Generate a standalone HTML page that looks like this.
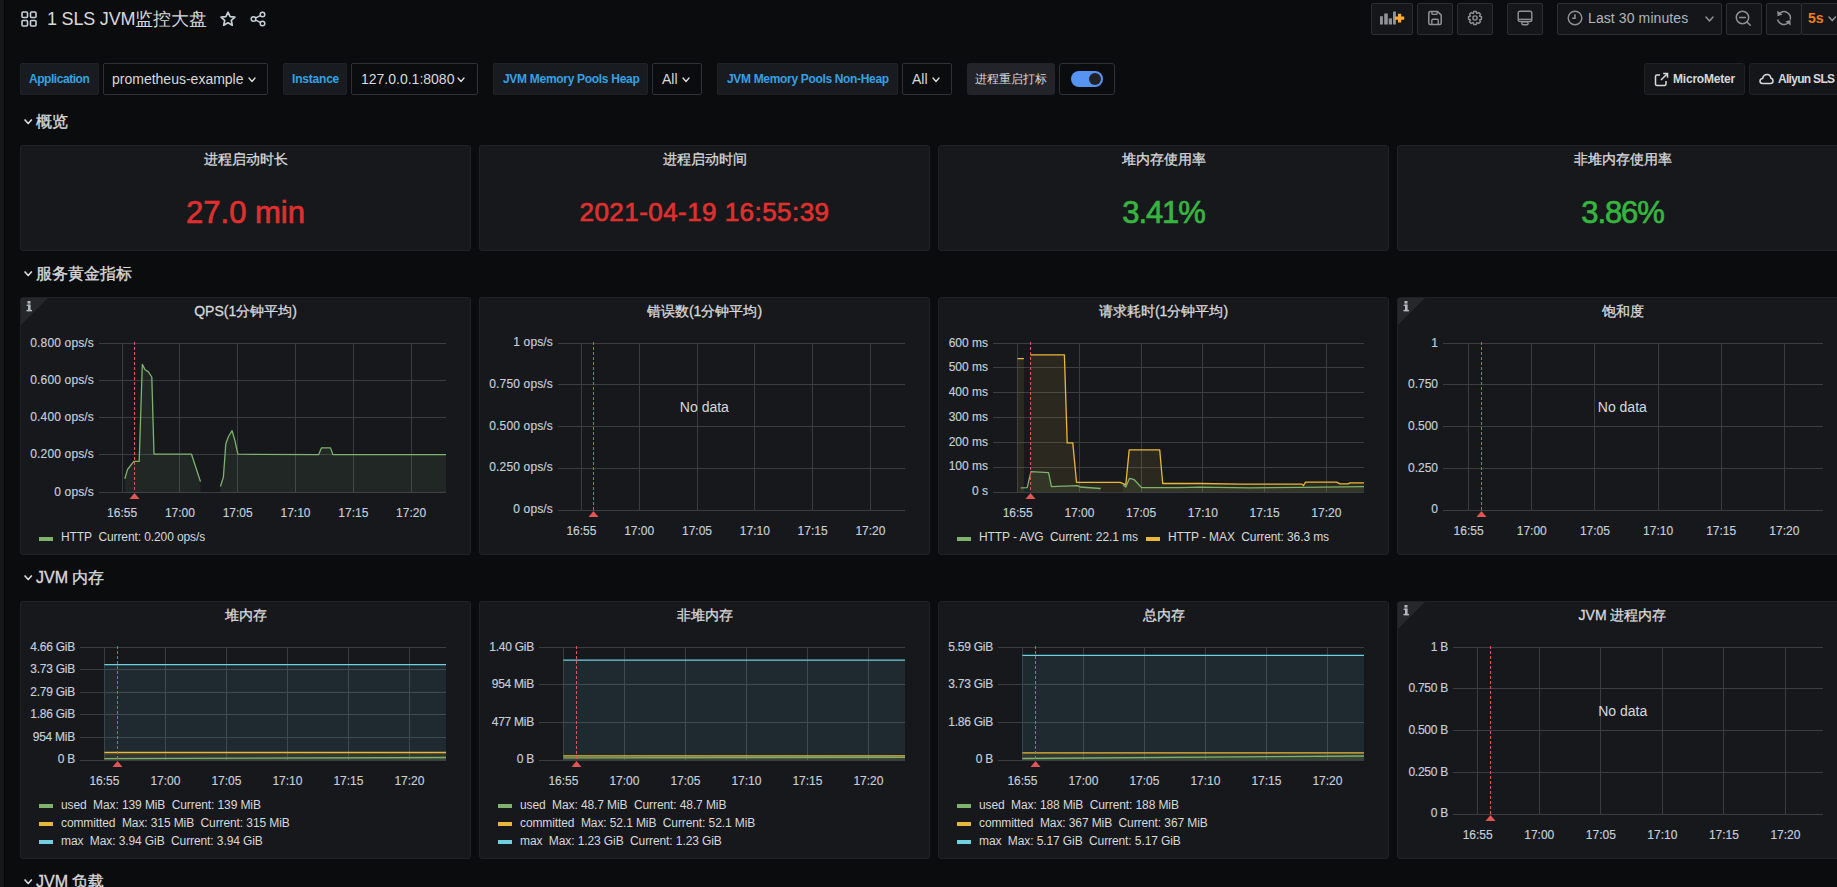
<!DOCTYPE html>
<html><head><meta charset="utf-8"><style>
html,body{margin:0;padding:0;}
body{width:1837px;height:887px;overflow:hidden;background:#0b0c0e;position:relative;font-family:"Liberation Sans", sans-serif;}
.t{position:absolute;white-space:nowrap;line-height:1;}
.b{position:absolute;box-sizing:border-box;}
.s{position:absolute;overflow:visible;}
.c{display:inline-block;width:1em;text-align:center;font-style:normal;}
</style></head><body>

<div class="b" style="left:0px;top:0px;width:4px;height:887px;background:#16181c;border-radius:0px;"></div>
<div class="b" style="left:4px;top:0px;width:1px;height:887px;background:#060709;border-radius:0px;"></div>
<svg class="s" style="left:21px;top:11px;" width="16" height="16" viewBox="0 0 16 16"><rect x="1" y="1" width="5.5" height="5.5" rx="1" fill="none" stroke="#c7d0d9" stroke-width="1.6"/><rect x="1" y="9.5" width="5.5" height="5.5" rx="1" fill="none" stroke="#c7d0d9" stroke-width="1.6"/><rect x="9.5" y="1" width="5.5" height="5.5" rx="1" fill="none" stroke="#c7d0d9" stroke-width="1.6"/><rect x="9.5" y="9.5" width="5.5" height="5.5" rx="1" fill="none" stroke="#c7d0d9" stroke-width="1.6"/></svg>
<div class="t" style="left:47px;top:19px;font-size:18px;color:#d8d9da;font-weight:400;transform:translateY(-50%);letter-spacing:-0.2px;">1 SLS JVM<i class="c">监</i><i class="c">控</i><i class="c">大</i><i class="c">盘</i></div>
<svg class="s" style="left:220px;top:11px;" width="16" height="16" viewBox="0 0 16 16"><path transform="translate(8 8.2) scale(1.1) translate(-8 -8.2)" d="M8 1.8 L9.9 5.9 L14.3 6.3 L11 9.3 L11.9 13.7 L8 11.4 L4.1 13.7 L5 9.3 L1.7 6.3 L6.1 5.9 Z" fill="none" stroke="#c7d0d9" stroke-width="1.5" stroke-linejoin="round"/></svg>
<svg class="s" style="left:250px;top:11px;" width="16" height="16" viewBox="0 0 16 16"><circle cx="12.5" cy="3.5" r="2.3" fill="none" stroke="#c7d0d9" stroke-width="1.5"/><circle cx="3.5" cy="8" r="2.3" fill="none" stroke="#c7d0d9" stroke-width="1.5"/><circle cx="12.5" cy="12.5" r="2.3" fill="none" stroke="#c7d0d9" stroke-width="1.5"/><path d="M5.6 6.9 L10.4 4.6 M5.6 9.1 L10.4 11.4" stroke="#c7d0d9" stroke-width="1.5"/></svg>
<div class="b" style="left:1371px;top:3px;width:42px;height:32px;background:#141619;border:1px solid #2c3033;border-radius:2px;"></div>
<div class="b" style="left:1417px;top:3px;width:36px;height:32px;background:#141619;border:1px solid #2c3033;border-radius:2px;"></div>
<div class="b" style="left:1457px;top:3px;width:36px;height:32px;background:#141619;border:1px solid #2c3033;border-radius:2px;"></div>
<div class="b" style="left:1507px;top:3px;width:36px;height:32px;background:#141619;border:1px solid #2c3033;border-radius:2px;"></div>
<div class="b" style="left:1557px;top:3px;width:165px;height:32px;background:#141619;border:1px solid #2c3033;border-radius:2px;"></div>
<div class="b" style="left:1726px;top:3px;width:36px;height:32px;background:#141619;border:1px solid #2c3033;border-radius:2px;"></div>
<div class="b" style="left:1766px;top:3px;width:36px;height:32px;background:#141619;border:1px solid #2c3033;border-radius:2px;"></div>
<div class="b" style="left:1801px;top:3px;width:49px;height:32px;background:#141619;border:1px solid #2c3033;border-radius:2px;"></div>
<svg class="s" style="left:1380px;top:11px;" width="26" height="16" viewBox="0 0 26 16"><rect x="0" y="5.2" width="2.9" height="8.3" fill="#8e9297"/><rect x="4.2" y="2.5" width="3.6" height="11" fill="#8e9297"/><rect x="8.8" y="7.4" width="3.2" height="6.1" fill="#8e9297"/><rect x="13" y="0.5" width="2.9" height="13" fill="#8e9297"/><path d="M15 7.1 H24.2 M19.6 2.7 V11.5" stroke="#ffab2e" stroke-width="3.2"/></svg>
<svg class="s" style="left:1427px;top:10px;" width="16" height="16" viewBox="0 0 16 16"><path d="M1.8 3 Q1.8 1.5 3.3 1.5 H10.6 L14.2 5.1 V13 Q14.2 14.5 12.7 14.5 H3.3 Q1.8 14.5 1.8 13 Z" fill="none" stroke="#8e9297" stroke-width="1.5" stroke-linejoin="round"/><path d="M4.9 1.8 V3.4 Q4.9 4.4 5.9 4.4 H9.1 Q10.1 4.4 10.1 3.4 V1.8 M4.8 14.2 V10.6 Q4.8 9.3 6.1 9.3 H10.1 Q11.3 9.3 11.3 10.6 V14.2" fill="none" stroke="#8e9297" stroke-width="1.4"/></svg>
<svg class="s" style="left:1467px;top:9.8px;" width="16" height="16" viewBox="0 0 16 16"><polygon points="12.56,6.20 14.48,6.76 14.48,9.24 12.56,9.80 12.50,9.95 13.46,11.71 11.71,13.46 9.95,12.50 9.80,12.56 9.24,14.48 6.76,14.48 6.20,12.56 6.05,12.50 4.29,13.46 2.54,11.71 3.50,9.95 3.44,9.80 1.52,9.24 1.52,6.76 3.44,6.20 3.50,6.05 2.54,4.29 4.29,2.54 6.05,3.50 6.20,3.44 6.76,1.52 9.24,1.52 9.80,3.44 9.95,3.50 11.71,2.54 13.46,4.29 12.50,6.05" fill="none" stroke="#8e9297" stroke-width="1.4" stroke-linejoin="round"/><circle cx="8" cy="8" r="2.1" fill="none" stroke="#8e9297" stroke-width="1.4"/></svg>
<svg class="s" style="left:1517px;top:10px;" width="16" height="17" viewBox="0 0 16 17"><rect x="1.2" y="1.2" width="13.6" height="10.3" rx="1.8" fill="none" stroke="#8e9297" stroke-width="1.4"/><path d="M1.5 9.3 H14.5" stroke="#8e9297" stroke-width="1.3"/><rect x="4.9" y="11.9" width="6.2" height="2.9" rx="1.4" fill="none" stroke="#8e9297" stroke-width="1.4"/></svg>
<svg class="s" style="left:1567px;top:10px;" width="16" height="16" viewBox="0 0 16 16"><circle cx="8" cy="8" r="6.8" fill="none" stroke="#8e9297" stroke-width="1.4"/><path d="M8 4.3 V8.2 H5.2" fill="none" stroke="#8e9297" stroke-width="1.5"/></svg>
<div class="t" style="left:1588px;top:18px;font-size:14px;color:#b0b6bd;font-weight:400;transform:translateY(-50%);letter-spacing:0.1px;">Last 30 minutes</div>
<svg class="s" style="left:1704.5px;top:15.8px;" width="9" height="6" viewBox="0 0 9 6"><path d="M1 1 L4.5 5 L8 1" fill="none" stroke="#8e9297" stroke-width="1.5" stroke-linecap="round" stroke-linejoin="round"/></svg>
<svg class="s" style="left:1735px;top:10px;" width="18" height="18" viewBox="0 0 18 18"><circle cx="7.5" cy="7.5" r="6.2" fill="none" stroke="#8e9297" stroke-width="1.5"/><path d="M4.6 7.5 H10.4 M12 12 L15.3 15.3" stroke="#8e9297" stroke-width="1.5" stroke-linecap="round"/></svg>
<svg class="s" style="left:1775px;top:9px;" width="18" height="18" viewBox="0 0 18 18"><path d="M4.6 4.4 A6.5 6.5 0 0 1 15.3 10.7" fill="none" stroke="#8e9297" stroke-width="1.5"/><path d="M2.6 10.5 A6.5 6.5 0 0 0 13.3 13.8" fill="none" stroke="#8e9297" stroke-width="1.5"/><path d="M2.2 1.8 L2.6 7.2 L7.6 5.6 Z" fill="#8e9297"/><path d="M15.7 16.4 L15.4 11.0 L10.4 12.5 Z" fill="#8e9297"/></svg>
<div class="t" style="left:1808px;top:18px;font-size:14px;color:#f77b1c;font-weight:700;transform:translateY(-50%);">5s</div>
<svg class="s" style="left:1828px;top:16px;" width="8.5" height="5.6" viewBox="0 0 8.5 5.6"><path d="M1 1 L4.25 4.6 L7.5 1" fill="none" stroke="#8e9297" stroke-width="1.5" stroke-linecap="round" stroke-linejoin="round"/></svg>
<div class="b" style="left:20px;top:63px;width:79px;height:32px;background:#181b1f;border:1px solid #202226;border-radius:2px;"></div>
<div class="t" style="left:29px;top:79px;font-size:12px;color:#33a2e5;font-weight:700;transform:translateY(-50%);letter-spacing:-0.45px;">Application</div>
<div class="b" style="left:103px;top:63px;width:165px;height:32px;background:#0b0c0e;border:1px solid #2c3235;border-radius:2px;"></div>
<div class="t" style="left:112px;top:79px;font-size:14px;color:#d8d9da;font-weight:400;transform:translateY(-50%);">prometheus-example</div>
<svg class="s" style="left:248px;top:77px;" width="8" height="5.5" viewBox="0 0 8 5.5"><path d="M1 1 L4.0 4.5 L7 1" fill="none" stroke="#d8d9da" stroke-width="1.4" stroke-linecap="round" stroke-linejoin="round"/></svg>
<div class="b" style="left:283px;top:63px;width:64px;height:32px;background:#181b1f;border:1px solid #202226;border-radius:2px;"></div>
<div class="t" style="left:292px;top:79px;font-size:12px;color:#33a2e5;font-weight:700;transform:translateY(-50%);letter-spacing:-0.2px;">Instance</div>
<div class="b" style="left:351px;top:63px;width:127px;height:32px;background:#0b0c0e;border:1px solid #2c3235;border-radius:2px;"></div>
<div class="t" style="left:361px;top:79px;font-size:14px;color:#d8d9da;font-weight:400;transform:translateY(-50%);">127.0.0.1:8080</div>
<svg class="s" style="left:457px;top:77px;" width="8" height="5.5" viewBox="0 0 8 5.5"><path d="M1 1 L4.0 4.5 L7 1" fill="none" stroke="#d8d9da" stroke-width="1.4" stroke-linecap="round" stroke-linejoin="round"/></svg>
<div class="b" style="left:493px;top:63px;width:155px;height:32px;background:#181b1f;border:1px solid #202226;border-radius:2px;"></div>
<div class="t" style="left:503px;top:79px;font-size:12px;color:#33a2e5;font-weight:700;transform:translateY(-50%);letter-spacing:-0.3px;">JVM Memory Pools Heap</div>
<div class="b" style="left:652px;top:63px;width:50px;height:32px;background:#0b0c0e;border:1px solid #2c3235;border-radius:2px;"></div>
<div class="t" style="left:662px;top:79px;font-size:14px;color:#d8d9da;font-weight:400;transform:translateY(-50%);">All</div>
<svg class="s" style="left:682px;top:77px;" width="8" height="5.5" viewBox="0 0 8 5.5"><path d="M1 1 L4.0 4.5 L7 1" fill="none" stroke="#d8d9da" stroke-width="1.4" stroke-linecap="round" stroke-linejoin="round"/></svg>
<div class="b" style="left:717px;top:63px;width:181px;height:32px;background:#181b1f;border:1px solid #202226;border-radius:2px;"></div>
<div class="t" style="left:727px;top:79px;font-size:12px;color:#33a2e5;font-weight:700;transform:translateY(-50%);letter-spacing:-0.33px;">JVM Memory Pools Non-Heap</div>
<div class="b" style="left:902px;top:63px;width:50px;height:32px;background:#0b0c0e;border:1px solid #2c3235;border-radius:2px;"></div>
<div class="t" style="left:912px;top:79px;font-size:14px;color:#d8d9da;font-weight:400;transform:translateY(-50%);">All</div>
<svg class="s" style="left:932px;top:77px;" width="8" height="5.5" viewBox="0 0 8 5.5"><path d="M1 1 L4.0 4.5 L7 1" fill="none" stroke="#d8d9da" stroke-width="1.4" stroke-linecap="round" stroke-linejoin="round"/></svg>
<div class="b" style="left:967px;top:63px;width:88px;height:32px;background:#222429;border-radius:3px;"></div>
<div class="t" style="left:975px;top:79px;font-size:12px;color:#d8d9da;font-weight:400;transform:translateY(-50%);"><i class="c">进</i><i class="c">程</i><i class="c">重</i><i class="c">启</i><i class="c">打</i><i class="c">标</i></div>
<div class="b" style="left:1059px;top:63px;width:56px;height:32px;background:#0b0c0e;border:1px solid #2c3235;border-radius:3px;"></div>
<div class="b" style="left:1071px;top:71px;width:32px;height:16px;background:#5794f2;border-radius:8px;"></div>
<div class="b" style="left:1089px;top:73px;width:12px;height:12px;border-radius:6px;background:#222226;"></div>
<div class="b" style="left:1644px;top:63px;width:101px;height:32px;background:#141619;border:1px solid #202226;border-radius:3px;"></div>
<svg class="s" style="left:1654px;top:72px;" width="15" height="15" viewBox="0 0 15 15"><path d="M6 3 H3 Q1.5 3 1.5 4.5 V12 Q1.5 13.5 3 13.5 H10.5 Q12 13.5 12 12 V9" fill="none" stroke="#d8d9da" stroke-width="1.5"/><path d="M7 8 L13.3 1.7 M9.2 1.5 H13.5 V5.8" fill="none" stroke="#d8d9da" stroke-width="1.5"/></svg>
<div class="t" style="left:1673px;top:79px;font-size:12px;color:#d8d9da;font-weight:700;transform:translateY(-50%);letter-spacing:-0.2px;">MicroMeter</div>
<div class="b" style="left:1749px;top:63px;width:101px;height:32px;background:#141619;border:1px solid #202226;border-radius:3px;"></div>
<svg class="s" style="left:1759px;top:73px;" width="15" height="12" viewBox="0 0 15 12"><path d="M3.5 10.5 Q1 10.5 1 8 Q1 5.6 3.6 5.5 Q4.5 1.5 8 1.5 Q11.3 1.5 12 5.3 Q14 5.7 14 8 Q14 10.5 11.5 10.5 Z" fill="none" stroke="#d8d9da" stroke-width="1.5"/></svg>
<div class="t" style="left:1778px;top:79px;font-size:12px;color:#d8d9da;font-weight:700;transform:translateY(-50%);letter-spacing:-0.7px;">Aliyun SLS</div>
<svg class="s" style="left:23.6px;top:118.8px;" width="8.4" height="5.5" viewBox="0 0 8.4 5.5"><path d="M1 1 L4.2 4.5 L7.4 1" fill="none" stroke="#d8d9da" stroke-width="1.7" stroke-linecap="round" stroke-linejoin="round"/></svg>
<div class="t" style="left:36px;top:122px;font-size:16px;color:#d8d9da;font-weight:400;transform:translateY(-50%);-webkit-text-stroke:0.35px #d8d9da;"><i class="c">概</i><i class="c">览</i></div>
<svg class="s" style="left:23.6px;top:270.8px;" width="8.4" height="5.5" viewBox="0 0 8.4 5.5"><path d="M1 1 L4.2 4.5 L7.4 1" fill="none" stroke="#d8d9da" stroke-width="1.7" stroke-linecap="round" stroke-linejoin="round"/></svg>
<div class="t" style="left:36px;top:274px;font-size:16px;color:#d8d9da;font-weight:400;transform:translateY(-50%);-webkit-text-stroke:0.35px #d8d9da;"><i class="c">服</i><i class="c">务</i><i class="c">黄</i><i class="c">金</i><i class="c">指</i><i class="c">标</i></div>
<svg class="s" style="left:23.6px;top:574.8px;" width="8.4" height="5.5" viewBox="0 0 8.4 5.5"><path d="M1 1 L4.2 4.5 L7.4 1" fill="none" stroke="#d8d9da" stroke-width="1.7" stroke-linecap="round" stroke-linejoin="round"/></svg>
<div class="t" style="left:36px;top:578px;font-size:16px;color:#d8d9da;font-weight:400;transform:translateY(-50%);-webkit-text-stroke:0.35px #d8d9da;">JVM <i class="c">内</i><i class="c">存</i></div>
<svg class="s" style="left:23.6px;top:878.8px;" width="8.4" height="5.5" viewBox="0 0 8.4 5.5"><path d="M1 1 L4.2 4.5 L7.4 1" fill="none" stroke="#d8d9da" stroke-width="1.7" stroke-linecap="round" stroke-linejoin="round"/></svg>
<div class="t" style="left:36px;top:882px;font-size:16px;color:#d8d9da;font-weight:400;transform:translateY(-50%);-webkit-text-stroke:0.35px #d8d9da;">JVM <i class="c">负</i><i class="c">载</i></div>
<div class="b" style="left:20px;top:145px;width:451px;height:106px;background:#16181c;border:1px solid #202226;border-radius:3px;"></div>
<div class="t" style="left:245.5px;top:158.5px;font-size:14px;color:#d8d9da;font-weight:400;transform:translate(-50%,-50%);-webkit-text-stroke:0.3px #d8d9da;"><i class="c">进</i><i class="c">程</i><i class="c">启</i><i class="c">动</i><i class="c">时</i><i class="c">长</i></div>
<div class="t" style="left:245.5px;top:211.5px;font-size:31px;color:#e0302e;font-weight:400;transform:translate(-50%,-50%);-webkit-text-stroke:0.7px #e0302e;">27.0 min</div>
<div class="b" style="left:479px;top:145px;width:451px;height:106px;background:#16181c;border:1px solid #202226;border-radius:3px;"></div>
<div class="t" style="left:704.5px;top:158.5px;font-size:14px;color:#d8d9da;font-weight:400;transform:translate(-50%,-50%);-webkit-text-stroke:0.3px #d8d9da;"><i class="c">进</i><i class="c">程</i><i class="c">启</i><i class="c">动</i><i class="c">时</i><i class="c">间</i></div>
<div class="t" style="left:704.5px;top:211.5px;font-size:26px;color:#e0302e;font-weight:400;transform:translate(-50%,-50%);-webkit-text-stroke:0.7px #e0302e;letter-spacing:0.45px;">2021-04-19 16:55:39</div>
<div class="b" style="left:938px;top:145px;width:451px;height:106px;background:#16181c;border:1px solid #202226;border-radius:3px;"></div>
<div class="t" style="left:1163.5px;top:158.5px;font-size:14px;color:#d8d9da;font-weight:400;transform:translate(-50%,-50%);-webkit-text-stroke:0.3px #d8d9da;"><i class="c">堆</i><i class="c">内</i><i class="c">存</i><i class="c">使</i><i class="c">用</i><i class="c">率</i></div>
<div class="t" style="left:1163.5px;top:211.5px;font-size:31px;color:#37b53f;font-weight:400;transform:translate(-50%,-50%);-webkit-text-stroke:0.7px #37b53f;letter-spacing:-1.1px;">3.41%</div>
<div class="b" style="left:1397px;top:145px;width:451px;height:106px;background:#16181c;border:1px solid #202226;border-radius:3px;"></div>
<div class="t" style="left:1622.5px;top:158.5px;font-size:14px;color:#d8d9da;font-weight:400;transform:translate(-50%,-50%);-webkit-text-stroke:0.3px #d8d9da;"><i class="c">非</i><i class="c">堆</i><i class="c">内</i><i class="c">存</i><i class="c">使</i><i class="c">用</i><i class="c">率</i></div>
<div class="t" style="left:1622.5px;top:211.5px;font-size:31px;color:#37b53f;font-weight:400;transform:translate(-50%,-50%);-webkit-text-stroke:0.7px #37b53f;letter-spacing:-1.1px;">3.86%</div>
<div class="b" style="left:20px;top:297px;width:451px;height:258px;background:#16181c;border:1px solid #202226;border-radius:3px;"></div>
<svg class="s" style="left:21px;top:298px;" width="27" height="27" viewBox="0 0 27 27"><path d="M0 2 Q0 0 2 0 H27 L0 27 Z" fill="#25272b"/></svg>
<svg class="s" style="left:26px;top:301px;" width="7" height="11" viewBox="0 0 7 11"><rect x="1.5" y="0" width="3" height="2.6" fill="#b4b9c0"/><rect x="2" y="3.6" width="2.6" height="6.6" fill="#b4b9c0"/><rect x="0.6" y="3.6" width="3.6" height="1.3" fill="#b4b9c0"/><rect x="0.4" y="8.9" width="5.6" height="1.4" fill="#b4b9c0"/></svg>
<div class="t" style="left:245.5px;top:310.5px;font-size:14px;color:#d8d9da;font-weight:400;transform:translate(-50%,-50%);-webkit-text-stroke:0.3px #d8d9da;">QPS(1<i class="c">分</i><i class="c">钟</i><i class="c">平</i><i class="c">均</i>)</div>
<svg class="s" style="left:0;top:0" width="1837" height="887"><path d="M99 343.5 H446" stroke="#3a3d42" stroke-width="1"/><path d="M99 380.5 H446" stroke="#3a3d42" stroke-width="1"/><path d="M99 417.5 H446" stroke="#3a3d42" stroke-width="1"/><path d="M99 454.5 H446" stroke="#3a3d42" stroke-width="1"/><path d="M99 492.5 H446" stroke="#3a3d42" stroke-width="1"/><path d="M122.5 343 V493" stroke="#3a3d42" stroke-width="1"/><path d="M179.5 343 V493" stroke="#3a3d42" stroke-width="1"/><path d="M237.5 343 V493" stroke="#3a3d42" stroke-width="1"/><path d="M295.5 343 V493" stroke="#3a3d42" stroke-width="1"/><path d="M353.5 343 V493" stroke="#3a3d42" stroke-width="1"/><path d="M411.5 343 V493" stroke="#3a3d42" stroke-width="1"/><path d="M124.8 478.9 L127.5 469.5 L133.8 461.4 L139.2 461.4 L142.3 364.4 L145.1 369.8 L148.2 371.6 L151.8 377.0 L154.0 454.2 L191.5 454.2 L200.5 481.6 L200.5 492.5 L124.8 492.5 Z" fill="#7eb26d" fill-opacity="0.1"/><path d="M124.8 478.9 L127.5 469.5 L133.8 461.4 L139.2 461.4 L142.3 364.4 L145.1 369.8 L148.2 371.6 L151.8 377.0 L154.0 454.2 L191.5 454.2 L200.5 481.6" fill="none" stroke="#7eb26d" stroke-width="1.3" stroke-linejoin="round"/><path d="M220.4 486.5 L223.4 477.1 L225.8 443.7 L228.5 436.5 L232.1 430.7 L234.8 440.1 L237.9 454.2 L318.7 454.6 L321.4 447.9 L330.5 447.9 L332.9 454.6 L446.0 454.6 L446.0 492.5 L220.4 492.5 Z" fill="#7eb26d" fill-opacity="0.1"/><path d="M220.4 486.5 L223.4 477.1 L225.8 443.7 L228.5 436.5 L232.1 430.7 L234.8 440.1 L237.9 454.2 L318.7 454.6 L321.4 447.9 L330.5 447.9 L332.9 454.6 L446.0 454.6" fill="none" stroke="#7eb26d" stroke-width="1.3" stroke-linejoin="round"/><path d="M134.5 342 V492" stroke="#e05555" stroke-width="1" stroke-dasharray="3,2"/><path d="M129.5 499 L134.5 493 L139.5 499 Z" fill="#e05555"/></svg>
<div class="t" style="right:1743px;top:342.7px;font-size:12px;color:#c7d0d9;font-weight:400;transform:translateY(-50%);letter-spacing:0.15px;-webkit-text-stroke:0.15px #c7d0d9;">0.800 ops/s</div>
<div class="t" style="right:1743px;top:379.95px;font-size:12px;color:#c7d0d9;font-weight:400;transform:translateY(-50%);letter-spacing:0.15px;-webkit-text-stroke:0.15px #c7d0d9;">0.600 ops/s</div>
<div class="t" style="right:1743px;top:417.2px;font-size:12px;color:#c7d0d9;font-weight:400;transform:translateY(-50%);letter-spacing:0.15px;-webkit-text-stroke:0.15px #c7d0d9;">0.400 ops/s</div>
<div class="t" style="right:1743px;top:454.45px;font-size:12px;color:#c7d0d9;font-weight:400;transform:translateY(-50%);letter-spacing:0.15px;-webkit-text-stroke:0.15px #c7d0d9;">0.200 ops/s</div>
<div class="t" style="right:1743px;top:491.7px;font-size:12px;color:#c7d0d9;font-weight:400;transform:translateY(-50%);letter-spacing:0.15px;-webkit-text-stroke:0.15px #c7d0d9;">0 ops/s</div>
<div class="t" style="left:122.1px;top:512.8px;font-size:12px;color:#c7d0d9;font-weight:400;transform:translate(-50%,-50%);-webkit-text-stroke:0.15px #c7d0d9;">16:55</div>
<div class="t" style="left:179.89999999999998px;top:512.8px;font-size:12px;color:#c7d0d9;font-weight:400;transform:translate(-50%,-50%);-webkit-text-stroke:0.15px #c7d0d9;">17:00</div>
<div class="t" style="left:237.7px;top:512.8px;font-size:12px;color:#c7d0d9;font-weight:400;transform:translate(-50%,-50%);-webkit-text-stroke:0.15px #c7d0d9;">17:05</div>
<div class="t" style="left:295.5px;top:512.8px;font-size:12px;color:#c7d0d9;font-weight:400;transform:translate(-50%,-50%);-webkit-text-stroke:0.15px #c7d0d9;">17:10</div>
<div class="t" style="left:353.29999999999995px;top:512.8px;font-size:12px;color:#c7d0d9;font-weight:400;transform:translate(-50%,-50%);-webkit-text-stroke:0.15px #c7d0d9;">17:15</div>
<div class="t" style="left:411.1px;top:512.8px;font-size:12px;color:#c7d0d9;font-weight:400;transform:translate(-50%,-50%);-webkit-text-stroke:0.15px #c7d0d9;">17:20</div>
<div class="b" style="left:39px;top:536.5px;width:14px;height:4px;background:#7eb26d;border-radius:0px;"></div>
<div class="t" style="left:61px;top:537px;font-size:12px;color:#d8d9da;font-weight:400;transform:translateY(-50%);letter-spacing:-0.1px;">HTTP&nbsp; Current: 0.200 ops/s</div>
<div class="b" style="left:479px;top:297px;width:451px;height:258px;background:#16181c;border:1px solid #202226;border-radius:3px;"></div>
<div class="t" style="left:704.5px;top:310.5px;font-size:14px;color:#d8d9da;font-weight:400;transform:translate(-50%,-50%);-webkit-text-stroke:0.3px #d8d9da;"><i class="c">错</i><i class="c">误</i><i class="c">数</i>(1<i class="c">分</i><i class="c">钟</i><i class="c">平</i><i class="c">均</i>)</div>
<svg class="s" style="left:0;top:0" width="1837" height="887"><path d="M558 343.5 H905" stroke="#3a3d42" stroke-width="1"/><path d="M558 384.5 H905" stroke="#3a3d42" stroke-width="1"/><path d="M558 426.5 H905" stroke="#3a3d42" stroke-width="1"/><path d="M558 468.5 H905" stroke="#3a3d42" stroke-width="1"/><path d="M558 510.5 H905" stroke="#3a3d42" stroke-width="1"/><path d="M581.5 343 V511" stroke="#3a3d42" stroke-width="1"/><path d="M639.5 343 V511" stroke="#3a3d42" stroke-width="1"/><path d="M697.5 343 V511" stroke="#3a3d42" stroke-width="1"/><path d="M754.5 343 V511" stroke="#3a3d42" stroke-width="1"/><path d="M812.5 343 V511" stroke="#3a3d42" stroke-width="1"/><path d="M870.5 343 V511" stroke="#3a3d42" stroke-width="1"/><path d="M593.5 342 V510" stroke="#e05555" stroke-width="1" stroke-dasharray="3,2"/><path d="M588.5 517 L593.5 511 L598.5 517 Z" fill="#e05555"/></svg>
<div class="t" style="right:1284px;top:342.2px;font-size:12px;color:#c7d0d9;font-weight:400;transform:translateY(-50%);letter-spacing:0.15px;-webkit-text-stroke:0.15px #c7d0d9;">1 ops/s</div>
<div class="t" style="right:1284px;top:383.95px;font-size:12px;color:#c7d0d9;font-weight:400;transform:translateY(-50%);letter-spacing:0.15px;-webkit-text-stroke:0.15px #c7d0d9;">0.750 ops/s</div>
<div class="t" style="right:1284px;top:425.7px;font-size:12px;color:#c7d0d9;font-weight:400;transform:translateY(-50%);letter-spacing:0.15px;-webkit-text-stroke:0.15px #c7d0d9;">0.500 ops/s</div>
<div class="t" style="right:1284px;top:467.45px;font-size:12px;color:#c7d0d9;font-weight:400;transform:translateY(-50%);letter-spacing:0.15px;-webkit-text-stroke:0.15px #c7d0d9;">0.250 ops/s</div>
<div class="t" style="right:1284px;top:509.2px;font-size:12px;color:#c7d0d9;font-weight:400;transform:translateY(-50%);letter-spacing:0.15px;-webkit-text-stroke:0.15px #c7d0d9;">0 ops/s</div>
<div class="t" style="left:581.4px;top:530.8px;font-size:12px;color:#c7d0d9;font-weight:400;transform:translate(-50%,-50%);-webkit-text-stroke:0.15px #c7d0d9;">16:55</div>
<div class="t" style="left:639.1999999999999px;top:530.8px;font-size:12px;color:#c7d0d9;font-weight:400;transform:translate(-50%,-50%);-webkit-text-stroke:0.15px #c7d0d9;">17:00</div>
<div class="t" style="left:697.0px;top:530.8px;font-size:12px;color:#c7d0d9;font-weight:400;transform:translate(-50%,-50%);-webkit-text-stroke:0.15px #c7d0d9;">17:05</div>
<div class="t" style="left:754.8px;top:530.8px;font-size:12px;color:#c7d0d9;font-weight:400;transform:translate(-50%,-50%);-webkit-text-stroke:0.15px #c7d0d9;">17:10</div>
<div class="t" style="left:812.5999999999999px;top:530.8px;font-size:12px;color:#c7d0d9;font-weight:400;transform:translate(-50%,-50%);-webkit-text-stroke:0.15px #c7d0d9;">17:15</div>
<div class="t" style="left:870.4px;top:530.8px;font-size:12px;color:#c7d0d9;font-weight:400;transform:translate(-50%,-50%);-webkit-text-stroke:0.15px #c7d0d9;">17:20</div>
<div class="t" style="left:704.4px;top:407px;font-size:14px;color:#d8d9da;font-weight:400;transform:translate(-50%,-50%);">No data</div>
<div class="b" style="left:938px;top:297px;width:451px;height:258px;background:#16181c;border:1px solid #202226;border-radius:3px;"></div>
<div class="t" style="left:1163.5px;top:310.5px;font-size:14px;color:#d8d9da;font-weight:400;transform:translate(-50%,-50%);-webkit-text-stroke:0.3px #d8d9da;"><i class="c">请</i><i class="c">求</i><i class="c">耗</i><i class="c">时</i>(1<i class="c">分</i><i class="c">钟</i><i class="c">平</i><i class="c">均</i>)</div>
<svg class="s" style="left:0;top:0" width="1837" height="887"><path d="M993 343.5 H1364" stroke="#3a3d42" stroke-width="1"/><path d="M993 367.5 H1364" stroke="#3a3d42" stroke-width="1"/><path d="M993 392.5 H1364" stroke="#3a3d42" stroke-width="1"/><path d="M993 417.5 H1364" stroke="#3a3d42" stroke-width="1"/><path d="M993 442.5 H1364" stroke="#3a3d42" stroke-width="1"/><path d="M993 467.5 H1364" stroke="#3a3d42" stroke-width="1"/><path d="M993 492.5 H1364" stroke="#3a3d42" stroke-width="1"/><path d="M1017.5 343 V493" stroke="#3a3d42" stroke-width="1"/><path d="M1079.5 343 V493" stroke="#3a3d42" stroke-width="1"/><path d="M1141.5 343 V493" stroke="#3a3d42" stroke-width="1"/><path d="M1202.5 343 V493" stroke="#3a3d42" stroke-width="1"/><path d="M1264.5 343 V493" stroke="#3a3d42" stroke-width="1"/><path d="M1326.5 343 V493" stroke="#3a3d42" stroke-width="1"/><path d="M1017.5 358.6 L1023.9 358.6 L1023.9 492 L1017.5 492 Z" fill="#eab839" fill-opacity="0.1"/><path d="M1017.5 358.6 L1023.9 358.6" fill="none" stroke="#eab839" stroke-width="1.3" stroke-linejoin="round"/><path d="M1030.4 354.9 L1064.4 354.9 L1067.2 442.9 L1072.8 442.9 L1076.5 482.3 L1120.2 482.3 L1125.8 484.8 L1129.2 449.8 L1159.7 449.8 L1162.7 483.5 L1200.0 483.5 L1240.0 484.1 L1301.7 484.1 L1303.5 485.5 L1305.5 482.2 L1336.6 482.2 L1340.0 483.8 L1348.0 483.8 L1350.0 482.8 L1364.0 482.8 L1364.0 492 L1030.4 492 Z" fill="#eab839" fill-opacity="0.1"/><path d="M1030.4 354.9 L1064.4 354.9 L1067.2 442.9 L1072.8 442.9 L1076.5 482.3 L1120.2 482.3 L1125.8 484.8 L1129.2 449.8 L1159.7 449.8 L1162.7 483.5 L1200.0 483.5 L1240.0 484.1 L1301.7 484.1 L1303.5 485.5 L1305.5 482.2 L1336.6 482.2 L1340.0 483.8 L1348.0 483.8 L1350.0 482.8 L1364.0 482.8" fill="none" stroke="#eab839" stroke-width="1.3" stroke-linejoin="round"/><path d="M1020.7 487.9 L1027.2 487.6 L1030.9 471.7 L1048.6 472.7 L1051.4 486.6 L1077.4 485.7 L1080.0 487.0 L1100.7 488.5 L1100.7 492 L1020.7 492 Z" fill="#7eb26d" fill-opacity="0.1"/><path d="M1020.7 487.9 L1027.2 487.6 L1030.9 471.7 L1048.6 472.7 L1051.4 486.6 L1077.4 485.7 L1080.0 487.0 L1100.7 488.5" fill="none" stroke="#7eb26d" stroke-width="1.3" stroke-linejoin="round"/><path d="M1123.0 484.8 L1125.8 487.0 L1129.5 478.3 L1134.2 479.7 L1141.6 487.6 L1180.0 487.6 L1200.0 487.2 L1250.0 487.8 L1300.0 487.4 L1364.0 486.6 L1364.0 492 L1123.0 492 Z" fill="#7eb26d" fill-opacity="0.1"/><path d="M1123.0 484.8 L1125.8 487.0 L1129.5 478.3 L1134.2 479.7 L1141.6 487.6 L1180.0 487.6 L1200.0 487.2 L1250.0 487.8 L1300.0 487.4 L1364.0 486.6" fill="none" stroke="#7eb26d" stroke-width="1.3" stroke-linejoin="round"/><path d="M1030.5 342 V492" stroke="#e05555" stroke-width="1" stroke-dasharray="3,2"/><path d="M1025.5 499 L1030.5 493 L1035.5 499 Z" fill="#e05555"/></svg>
<div class="t" style="right:849px;top:342.5px;font-size:12px;color:#c7d0d9;font-weight:400;transform:translateY(-50%);-webkit-text-stroke:0.15px #c7d0d9;">600 ms</div>
<div class="t" style="right:849px;top:367.28333333333336px;font-size:12px;color:#c7d0d9;font-weight:400;transform:translateY(-50%);-webkit-text-stroke:0.15px #c7d0d9;">500 ms</div>
<div class="t" style="right:849px;top:392.06666666666666px;font-size:12px;color:#c7d0d9;font-weight:400;transform:translateY(-50%);-webkit-text-stroke:0.15px #c7d0d9;">400 ms</div>
<div class="t" style="right:849px;top:416.84999999999997px;font-size:12px;color:#c7d0d9;font-weight:400;transform:translateY(-50%);-webkit-text-stroke:0.15px #c7d0d9;">300 ms</div>
<div class="t" style="right:849px;top:441.6333333333333px;font-size:12px;color:#c7d0d9;font-weight:400;transform:translateY(-50%);-webkit-text-stroke:0.15px #c7d0d9;">200 ms</div>
<div class="t" style="right:849px;top:466.4166666666667px;font-size:12px;color:#c7d0d9;font-weight:400;transform:translateY(-50%);-webkit-text-stroke:0.15px #c7d0d9;">100 ms</div>
<div class="t" style="right:849px;top:491.2px;font-size:12px;color:#c7d0d9;font-weight:400;transform:translateY(-50%);-webkit-text-stroke:0.15px #c7d0d9;">0 s</div>
<div class="t" style="left:1017.7px;top:512.8px;font-size:12px;color:#c7d0d9;font-weight:400;transform:translate(-50%,-50%);-webkit-text-stroke:0.15px #c7d0d9;">16:55</div>
<div class="t" style="left:1079.42px;top:512.8px;font-size:12px;color:#c7d0d9;font-weight:400;transform:translate(-50%,-50%);-webkit-text-stroke:0.15px #c7d0d9;">17:00</div>
<div class="t" style="left:1141.14px;top:512.8px;font-size:12px;color:#c7d0d9;font-weight:400;transform:translate(-50%,-50%);-webkit-text-stroke:0.15px #c7d0d9;">17:05</div>
<div class="t" style="left:1202.8600000000001px;top:512.8px;font-size:12px;color:#c7d0d9;font-weight:400;transform:translate(-50%,-50%);-webkit-text-stroke:0.15px #c7d0d9;">17:10</div>
<div class="t" style="left:1264.58px;top:512.8px;font-size:12px;color:#c7d0d9;font-weight:400;transform:translate(-50%,-50%);-webkit-text-stroke:0.15px #c7d0d9;">17:15</div>
<div class="t" style="left:1326.3000000000002px;top:512.8px;font-size:12px;color:#c7d0d9;font-weight:400;transform:translate(-50%,-50%);-webkit-text-stroke:0.15px #c7d0d9;">17:20</div>
<div class="b" style="left:957px;top:536.5px;width:14px;height:4px;background:#7eb26d;border-radius:0px;"></div>
<div class="t" style="left:979px;top:537px;font-size:12px;color:#d8d9da;font-weight:400;transform:translateY(-50%);letter-spacing:-0.1px;">HTTP - AVG&nbsp; Current: 22.1 ms</div>
<div class="b" style="left:1146px;top:536.5px;width:14px;height:4px;background:#eab839;border-radius:0px;"></div>
<div class="t" style="left:1168px;top:537px;font-size:12px;color:#d8d9da;font-weight:400;transform:translateY(-50%);letter-spacing:-0.1px;">HTTP - MAX&nbsp; Current: 36.3 ms</div>
<div class="b" style="left:1397px;top:297px;width:451px;height:258px;background:#16181c;border:1px solid #202226;border-radius:3px;"></div>
<svg class="s" style="left:1398px;top:298px;" width="27" height="27" viewBox="0 0 27 27"><path d="M0 2 Q0 0 2 0 H27 L0 27 Z" fill="#25272b"/></svg>
<svg class="s" style="left:1403px;top:301px;" width="7" height="11" viewBox="0 0 7 11"><rect x="1.5" y="0" width="3" height="2.6" fill="#b4b9c0"/><rect x="2" y="3.6" width="2.6" height="6.6" fill="#b4b9c0"/><rect x="0.6" y="3.6" width="3.6" height="1.3" fill="#b4b9c0"/><rect x="0.4" y="8.9" width="5.6" height="1.4" fill="#b4b9c0"/></svg>
<div class="t" style="left:1622.5px;top:310.5px;font-size:14px;color:#d8d9da;font-weight:400;transform:translate(-50%,-50%);-webkit-text-stroke:0.3px #d8d9da;"><i class="c">饱</i><i class="c">和</i><i class="c">度</i></div>
<svg class="s" style="left:0;top:0" width="1837" height="887"><path d="M1443 343.5 H1823" stroke="#3a3d42" stroke-width="1"/><path d="M1443 384.5 H1823" stroke="#3a3d42" stroke-width="1"/><path d="M1443 426.5 H1823" stroke="#3a3d42" stroke-width="1"/><path d="M1443 468.5 H1823" stroke="#3a3d42" stroke-width="1"/><path d="M1443 510.5 H1823" stroke="#3a3d42" stroke-width="1"/><path d="M1468.5 343 V511" stroke="#3a3d42" stroke-width="1"/><path d="M1531.5 343 V511" stroke="#3a3d42" stroke-width="1"/><path d="M1594.5 343 V511" stroke="#3a3d42" stroke-width="1"/><path d="M1658.5 343 V511" stroke="#3a3d42" stroke-width="1"/><path d="M1721.5 343 V511" stroke="#3a3d42" stroke-width="1"/><path d="M1784.5 343 V511" stroke="#3a3d42" stroke-width="1"/><path d="M1481.5 342 V510" stroke="#e05555" stroke-width="1" stroke-dasharray="3,2"/><path d="M1476.5 517 L1481.5 511 L1486.5 517 Z" fill="#e05555"/></svg>
<div class="t" style="right:399px;top:342.5px;font-size:12px;color:#c7d0d9;font-weight:400;transform:translateY(-50%);-webkit-text-stroke:0.15px #c7d0d9;">1</div>
<div class="t" style="right:399px;top:384.22499999999997px;font-size:12px;color:#c7d0d9;font-weight:400;transform:translateY(-50%);-webkit-text-stroke:0.15px #c7d0d9;">0.750</div>
<div class="t" style="right:399px;top:425.95px;font-size:12px;color:#c7d0d9;font-weight:400;transform:translateY(-50%);-webkit-text-stroke:0.15px #c7d0d9;">0.500</div>
<div class="t" style="right:399px;top:467.675px;font-size:12px;color:#c7d0d9;font-weight:400;transform:translateY(-50%);-webkit-text-stroke:0.15px #c7d0d9;">0.250</div>
<div class="t" style="right:399px;top:509.4px;font-size:12px;color:#c7d0d9;font-weight:400;transform:translateY(-50%);-webkit-text-stroke:0.15px #c7d0d9;">0</div>
<div class="t" style="left:1468.6px;top:530.8px;font-size:12px;color:#c7d0d9;font-weight:400;transform:translate(-50%,-50%);-webkit-text-stroke:0.15px #c7d0d9;">16:55</div>
<div class="t" style="left:1531.75px;top:530.8px;font-size:12px;color:#c7d0d9;font-weight:400;transform:translate(-50%,-50%);-webkit-text-stroke:0.15px #c7d0d9;">17:00</div>
<div class="t" style="left:1594.8999999999999px;top:530.8px;font-size:12px;color:#c7d0d9;font-weight:400;transform:translate(-50%,-50%);-webkit-text-stroke:0.15px #c7d0d9;">17:05</div>
<div class="t" style="left:1658.05px;top:530.8px;font-size:12px;color:#c7d0d9;font-weight:400;transform:translate(-50%,-50%);-webkit-text-stroke:0.15px #c7d0d9;">17:10</div>
<div class="t" style="left:1721.1999999999998px;top:530.8px;font-size:12px;color:#c7d0d9;font-weight:400;transform:translate(-50%,-50%);-webkit-text-stroke:0.15px #c7d0d9;">17:15</div>
<div class="t" style="left:1784.35px;top:530.8px;font-size:12px;color:#c7d0d9;font-weight:400;transform:translate(-50%,-50%);-webkit-text-stroke:0.15px #c7d0d9;">17:20</div>
<div class="t" style="left:1622.3px;top:407px;font-size:14px;color:#d8d9da;font-weight:400;transform:translate(-50%,-50%);">No data</div>
<div class="b" style="left:20px;top:601px;width:451px;height:258px;background:#16181c;border:1px solid #202226;border-radius:3px;"></div>
<div class="t" style="left:245.5px;top:614.5px;font-size:14px;color:#d8d9da;font-weight:400;transform:translate(-50%,-50%);-webkit-text-stroke:0.3px #d8d9da;"><i class="c">堆</i><i class="c">内</i><i class="c">存</i></div>
<svg class="s" style="left:0;top:0" width="1837" height="887"><path d="M80 647.5 H446" stroke="#3a3d42" stroke-width="1"/><path d="M80 669.5 H446" stroke="#3a3d42" stroke-width="1"/><path d="M80 692.5 H446" stroke="#3a3d42" stroke-width="1"/><path d="M80 714.5 H446" stroke="#3a3d42" stroke-width="1"/><path d="M80 737.5 H446" stroke="#3a3d42" stroke-width="1"/><path d="M80 760.5 H446" stroke="#3a3d42" stroke-width="1"/><path d="M104.5 647 V761" stroke="#3a3d42" stroke-width="1"/><path d="M165.5 647 V761" stroke="#3a3d42" stroke-width="1"/><path d="M226.5 647 V761" stroke="#3a3d42" stroke-width="1"/><path d="M287.5 647 V761" stroke="#3a3d42" stroke-width="1"/><path d="M348.5 647 V761" stroke="#3a3d42" stroke-width="1"/><path d="M409.5 647 V761" stroke="#3a3d42" stroke-width="1"/><path d="M104.4 664.6 L446.0 664.6 L446.0 760 L104.4 760 Z" fill="#6ed0e0" fill-opacity="0.1"/><path d="M104.4 664.6 L446.0 664.6" fill="none" stroke="#6ed0e0" stroke-width="1.3" stroke-linejoin="round"/><path d="M104.4 752.5 L446.0 752.5 L446.0 760 L104.4 760 Z" fill="#eab839" fill-opacity="0.1"/><path d="M104.4 752.5 L446.0 752.5" fill="none" stroke="#eab839" stroke-width="1.3" stroke-linejoin="round"/><path d="M104.4 758.6 L446.0 757.5 L446.0 760 L104.4 760 Z" fill="#7eb26d" fill-opacity="0.1"/><path d="M104.4 758.6 L446.0 757.5" fill="none" stroke="#7eb26d" stroke-width="1.3" stroke-linejoin="round"/><path d="M117.5 646 V760" stroke="#e05555" stroke-width="1" stroke-dasharray="3,2"/><path d="M112.5 767 L117.5 761 L122.5 767 Z" fill="#e05555"/></svg>
<div class="t" style="right:1762px;top:646.7px;font-size:12px;color:#c7d0d9;font-weight:400;transform:translateY(-50%);letter-spacing:-0.25px;-webkit-text-stroke:0.15px #c7d0d9;">4.66 GiB</div>
<div class="t" style="right:1762px;top:669.2px;font-size:12px;color:#c7d0d9;font-weight:400;transform:translateY(-50%);letter-spacing:-0.25px;-webkit-text-stroke:0.15px #c7d0d9;">3.73 GiB</div>
<div class="t" style="right:1762px;top:691.7px;font-size:12px;color:#c7d0d9;font-weight:400;transform:translateY(-50%);letter-spacing:-0.25px;-webkit-text-stroke:0.15px #c7d0d9;">2.79 GiB</div>
<div class="t" style="right:1762px;top:714.2px;font-size:12px;color:#c7d0d9;font-weight:400;transform:translateY(-50%);letter-spacing:-0.25px;-webkit-text-stroke:0.15px #c7d0d9;">1.86 GiB</div>
<div class="t" style="right:1762px;top:736.7px;font-size:12px;color:#c7d0d9;font-weight:400;transform:translateY(-50%);letter-spacing:-0.25px;-webkit-text-stroke:0.15px #c7d0d9;">954 MiB</div>
<div class="t" style="right:1762px;top:759.2px;font-size:12px;color:#c7d0d9;font-weight:400;transform:translateY(-50%);letter-spacing:-0.25px;-webkit-text-stroke:0.15px #c7d0d9;">0 B</div>
<div class="t" style="left:104.4px;top:781.4px;font-size:12px;color:#c7d0d9;font-weight:400;transform:translate(-50%,-50%);-webkit-text-stroke:0.15px #c7d0d9;">16:55</div>
<div class="t" style="left:165.4px;top:781.4px;font-size:12px;color:#c7d0d9;font-weight:400;transform:translate(-50%,-50%);-webkit-text-stroke:0.15px #c7d0d9;">17:00</div>
<div class="t" style="left:226.4px;top:781.4px;font-size:12px;color:#c7d0d9;font-weight:400;transform:translate(-50%,-50%);-webkit-text-stroke:0.15px #c7d0d9;">17:05</div>
<div class="t" style="left:287.4px;top:781.4px;font-size:12px;color:#c7d0d9;font-weight:400;transform:translate(-50%,-50%);-webkit-text-stroke:0.15px #c7d0d9;">17:10</div>
<div class="t" style="left:348.4px;top:781.4px;font-size:12px;color:#c7d0d9;font-weight:400;transform:translate(-50%,-50%);-webkit-text-stroke:0.15px #c7d0d9;">17:15</div>
<div class="t" style="left:409.4px;top:781.4px;font-size:12px;color:#c7d0d9;font-weight:400;transform:translate(-50%,-50%);-webkit-text-stroke:0.15px #c7d0d9;">17:20</div>
<div class="b" style="left:39px;top:804.0px;width:14px;height:4px;background:#7eb26d;border-radius:0px;"></div>
<div class="t" style="left:61px;top:804.5px;font-size:12px;color:#d8d9da;font-weight:400;transform:translateY(-50%);letter-spacing:-0.1px;">used&nbsp; Max: 139 MiB&nbsp; Current: 139 MiB</div>
<div class="b" style="left:39px;top:822.1px;width:14px;height:4px;background:#eab839;border-radius:0px;"></div>
<div class="t" style="left:61px;top:822.6px;font-size:12px;color:#d8d9da;font-weight:400;transform:translateY(-50%);letter-spacing:-0.1px;">committed&nbsp; Max: 315 MiB&nbsp; Current: 315 MiB</div>
<div class="b" style="left:39px;top:840.4px;width:14px;height:4px;background:#6ed0e0;border-radius:0px;"></div>
<div class="t" style="left:61px;top:840.9px;font-size:12px;color:#d8d9da;font-weight:400;transform:translateY(-50%);letter-spacing:-0.1px;">max&nbsp; Max: 3.94 GiB&nbsp; Current: 3.94 GiB</div>
<div class="b" style="left:479px;top:601px;width:451px;height:258px;background:#16181c;border:1px solid #202226;border-radius:3px;"></div>
<div class="t" style="left:704.5px;top:614.5px;font-size:14px;color:#d8d9da;font-weight:400;transform:translate(-50%,-50%);-webkit-text-stroke:0.3px #d8d9da;"><i class="c">非</i><i class="c">堆</i><i class="c">内</i><i class="c">存</i></div>
<svg class="s" style="left:0;top:0" width="1837" height="887"><path d="M539 647.5 H905" stroke="#3a3d42" stroke-width="1"/><path d="M539 684.5 H905" stroke="#3a3d42" stroke-width="1"/><path d="M539 722.5 H905" stroke="#3a3d42" stroke-width="1"/><path d="M539 760.5 H905" stroke="#3a3d42" stroke-width="1"/><path d="M563.5 647 V761" stroke="#3a3d42" stroke-width="1"/><path d="M624.5 647 V761" stroke="#3a3d42" stroke-width="1"/><path d="M685.5 647 V761" stroke="#3a3d42" stroke-width="1"/><path d="M746.5 647 V761" stroke="#3a3d42" stroke-width="1"/><path d="M807.5 647 V761" stroke="#3a3d42" stroke-width="1"/><path d="M868.5 647 V761" stroke="#3a3d42" stroke-width="1"/><path d="M563.4 660.2 L905.0 660.2 L905.0 760 L563.4 760 Z" fill="#6ed0e0" fill-opacity="0.1"/><path d="M563.4 660.2 L905.0 660.2" fill="none" stroke="#6ed0e0" stroke-width="1.3" stroke-linejoin="round"/><path d="M563.4 755.9 L905.0 755.9 L905.0 760 L563.4 760 Z" fill="#eab839" fill-opacity="0.1"/><path d="M563.4 755.9 L905.0 755.9" fill="none" stroke="#eab839" stroke-width="1.3" stroke-linejoin="round"/><path d="M563.4 757.8 L905.0 757.3 L905.0 760 L563.4 760 Z" fill="#7eb26d" fill-opacity="0.1"/><path d="M563.4 757.8 L905.0 757.3" fill="none" stroke="#7eb26d" stroke-width="1.3" stroke-linejoin="round"/><path d="M576.5 646 V760" stroke="#e05555" stroke-width="1" stroke-dasharray="3,2"/><path d="M571.5 767 L576.5 761 L581.5 767 Z" fill="#e05555"/></svg>
<div class="t" style="right:1303px;top:646.7px;font-size:12px;color:#c7d0d9;font-weight:400;transform:translateY(-50%);letter-spacing:-0.25px;-webkit-text-stroke:0.15px #c7d0d9;">1.40 GiB</div>
<div class="t" style="right:1303px;top:684.2px;font-size:12px;color:#c7d0d9;font-weight:400;transform:translateY(-50%);letter-spacing:-0.25px;-webkit-text-stroke:0.15px #c7d0d9;">954 MiB</div>
<div class="t" style="right:1303px;top:721.7px;font-size:12px;color:#c7d0d9;font-weight:400;transform:translateY(-50%);letter-spacing:-0.25px;-webkit-text-stroke:0.15px #c7d0d9;">477 MiB</div>
<div class="t" style="right:1303px;top:759.2px;font-size:12px;color:#c7d0d9;font-weight:400;transform:translateY(-50%);letter-spacing:-0.25px;-webkit-text-stroke:0.15px #c7d0d9;">0 B</div>
<div class="t" style="left:563.4px;top:781.4px;font-size:12px;color:#c7d0d9;font-weight:400;transform:translate(-50%,-50%);-webkit-text-stroke:0.15px #c7d0d9;">16:55</div>
<div class="t" style="left:624.4px;top:781.4px;font-size:12px;color:#c7d0d9;font-weight:400;transform:translate(-50%,-50%);-webkit-text-stroke:0.15px #c7d0d9;">17:00</div>
<div class="t" style="left:685.4px;top:781.4px;font-size:12px;color:#c7d0d9;font-weight:400;transform:translate(-50%,-50%);-webkit-text-stroke:0.15px #c7d0d9;">17:05</div>
<div class="t" style="left:746.4px;top:781.4px;font-size:12px;color:#c7d0d9;font-weight:400;transform:translate(-50%,-50%);-webkit-text-stroke:0.15px #c7d0d9;">17:10</div>
<div class="t" style="left:807.4px;top:781.4px;font-size:12px;color:#c7d0d9;font-weight:400;transform:translate(-50%,-50%);-webkit-text-stroke:0.15px #c7d0d9;">17:15</div>
<div class="t" style="left:868.4px;top:781.4px;font-size:12px;color:#c7d0d9;font-weight:400;transform:translate(-50%,-50%);-webkit-text-stroke:0.15px #c7d0d9;">17:20</div>
<div class="b" style="left:498px;top:804.0px;width:14px;height:4px;background:#7eb26d;border-radius:0px;"></div>
<div class="t" style="left:520px;top:804.5px;font-size:12px;color:#d8d9da;font-weight:400;transform:translateY(-50%);letter-spacing:-0.1px;">used&nbsp; Max: 48.7 MiB&nbsp; Current: 48.7 MiB</div>
<div class="b" style="left:498px;top:822.1px;width:14px;height:4px;background:#eab839;border-radius:0px;"></div>
<div class="t" style="left:520px;top:822.6px;font-size:12px;color:#d8d9da;font-weight:400;transform:translateY(-50%);letter-spacing:-0.1px;">committed&nbsp; Max: 52.1 MiB&nbsp; Current: 52.1 MiB</div>
<div class="b" style="left:498px;top:840.4px;width:14px;height:4px;background:#6ed0e0;border-radius:0px;"></div>
<div class="t" style="left:520px;top:840.9px;font-size:12px;color:#d8d9da;font-weight:400;transform:translateY(-50%);letter-spacing:-0.1px;">max&nbsp; Max: 1.23 GiB&nbsp; Current: 1.23 GiB</div>
<div class="b" style="left:938px;top:601px;width:451px;height:258px;background:#16181c;border:1px solid #202226;border-radius:3px;"></div>
<div class="t" style="left:1163.5px;top:614.5px;font-size:14px;color:#d8d9da;font-weight:400;transform:translate(-50%,-50%);-webkit-text-stroke:0.3px #d8d9da;"><i class="c">总</i><i class="c">内</i><i class="c">存</i></div>
<svg class="s" style="left:0;top:0" width="1837" height="887"><path d="M998 647.5 H1364" stroke="#3a3d42" stroke-width="1"/><path d="M998 684.5 H1364" stroke="#3a3d42" stroke-width="1"/><path d="M998 722.5 H1364" stroke="#3a3d42" stroke-width="1"/><path d="M998 760.5 H1364" stroke="#3a3d42" stroke-width="1"/><path d="M1022.5 647 V761" stroke="#3a3d42" stroke-width="1"/><path d="M1083.5 647 V761" stroke="#3a3d42" stroke-width="1"/><path d="M1144.5 647 V761" stroke="#3a3d42" stroke-width="1"/><path d="M1205.5 647 V761" stroke="#3a3d42" stroke-width="1"/><path d="M1266.5 647 V761" stroke="#3a3d42" stroke-width="1"/><path d="M1327.5 647 V761" stroke="#3a3d42" stroke-width="1"/><path d="M1022.4 655.4 L1364.0 655.4 L1364.0 760 L1022.4 760 Z" fill="#6ed0e0" fill-opacity="0.1"/><path d="M1022.4 655.4 L1364.0 655.4" fill="none" stroke="#6ed0e0" stroke-width="1.3" stroke-linejoin="round"/><path d="M1022.4 752.8 L1364.0 752.8 L1364.0 760 L1022.4 760 Z" fill="#eab839" fill-opacity="0.1"/><path d="M1022.4 752.8 L1364.0 752.8" fill="none" stroke="#eab839" stroke-width="1.3" stroke-linejoin="round"/><path d="M1022.4 758.5 L1364.0 756.0 L1364.0 760 L1022.4 760 Z" fill="#7eb26d" fill-opacity="0.1"/><path d="M1022.4 758.5 L1364.0 756.0" fill="none" stroke="#7eb26d" stroke-width="1.3" stroke-linejoin="round"/><path d="M1035.5 646 V760" stroke="#e05555" stroke-width="1" stroke-dasharray="3,2"/><path d="M1030.5 767 L1035.5 761 L1040.5 767 Z" fill="#e05555"/></svg>
<div class="t" style="right:844px;top:646.7px;font-size:12px;color:#c7d0d9;font-weight:400;transform:translateY(-50%);letter-spacing:-0.25px;-webkit-text-stroke:0.15px #c7d0d9;">5.59 GiB</div>
<div class="t" style="right:844px;top:684.2px;font-size:12px;color:#c7d0d9;font-weight:400;transform:translateY(-50%);letter-spacing:-0.25px;-webkit-text-stroke:0.15px #c7d0d9;">3.73 GiB</div>
<div class="t" style="right:844px;top:721.7px;font-size:12px;color:#c7d0d9;font-weight:400;transform:translateY(-50%);letter-spacing:-0.25px;-webkit-text-stroke:0.15px #c7d0d9;">1.86 GiB</div>
<div class="t" style="right:844px;top:759.2px;font-size:12px;color:#c7d0d9;font-weight:400;transform:translateY(-50%);letter-spacing:-0.25px;-webkit-text-stroke:0.15px #c7d0d9;">0 B</div>
<div class="t" style="left:1022.4px;top:781.4px;font-size:12px;color:#c7d0d9;font-weight:400;transform:translate(-50%,-50%);-webkit-text-stroke:0.15px #c7d0d9;">16:55</div>
<div class="t" style="left:1083.4px;top:781.4px;font-size:12px;color:#c7d0d9;font-weight:400;transform:translate(-50%,-50%);-webkit-text-stroke:0.15px #c7d0d9;">17:00</div>
<div class="t" style="left:1144.4px;top:781.4px;font-size:12px;color:#c7d0d9;font-weight:400;transform:translate(-50%,-50%);-webkit-text-stroke:0.15px #c7d0d9;">17:05</div>
<div class="t" style="left:1205.4px;top:781.4px;font-size:12px;color:#c7d0d9;font-weight:400;transform:translate(-50%,-50%);-webkit-text-stroke:0.15px #c7d0d9;">17:10</div>
<div class="t" style="left:1266.4px;top:781.4px;font-size:12px;color:#c7d0d9;font-weight:400;transform:translate(-50%,-50%);-webkit-text-stroke:0.15px #c7d0d9;">17:15</div>
<div class="t" style="left:1327.4px;top:781.4px;font-size:12px;color:#c7d0d9;font-weight:400;transform:translate(-50%,-50%);-webkit-text-stroke:0.15px #c7d0d9;">17:20</div>
<div class="b" style="left:957px;top:804.0px;width:14px;height:4px;background:#7eb26d;border-radius:0px;"></div>
<div class="t" style="left:979px;top:804.5px;font-size:12px;color:#d8d9da;font-weight:400;transform:translateY(-50%);letter-spacing:-0.1px;">used&nbsp; Max: 188 MiB&nbsp; Current: 188 MiB</div>
<div class="b" style="left:957px;top:822.1px;width:14px;height:4px;background:#eab839;border-radius:0px;"></div>
<div class="t" style="left:979px;top:822.6px;font-size:12px;color:#d8d9da;font-weight:400;transform:translateY(-50%);letter-spacing:-0.1px;">committed&nbsp; Max: 367 MiB&nbsp; Current: 367 MiB</div>
<div class="b" style="left:957px;top:840.4px;width:14px;height:4px;background:#6ed0e0;border-radius:0px;"></div>
<div class="t" style="left:979px;top:840.9px;font-size:12px;color:#d8d9da;font-weight:400;transform:translateY(-50%);letter-spacing:-0.1px;">max&nbsp; Max: 5.17 GiB&nbsp; Current: 5.17 GiB</div>
<div class="b" style="left:1397px;top:601px;width:451px;height:258px;background:#16181c;border:1px solid #202226;border-radius:3px;"></div>
<svg class="s" style="left:1398px;top:602px;" width="27" height="27" viewBox="0 0 27 27"><path d="M0 2 Q0 0 2 0 H27 L0 27 Z" fill="#25272b"/></svg>
<svg class="s" style="left:1403px;top:605px;" width="7" height="11" viewBox="0 0 7 11"><rect x="1.5" y="0" width="3" height="2.6" fill="#b4b9c0"/><rect x="2" y="3.6" width="2.6" height="6.6" fill="#b4b9c0"/><rect x="0.6" y="3.6" width="3.6" height="1.3" fill="#b4b9c0"/><rect x="0.4" y="8.9" width="5.6" height="1.4" fill="#b4b9c0"/></svg>
<div class="t" style="left:1622.5px;top:614.5px;font-size:14px;color:#d8d9da;font-weight:400;transform:translate(-50%,-50%);-webkit-text-stroke:0.3px #d8d9da;">JVM <i class="c">进</i><i class="c">程</i><i class="c">内</i><i class="c">存</i></div>
<svg class="s" style="left:0;top:0" width="1837" height="887"><path d="M1453 647.5 H1823" stroke="#3a3d42" stroke-width="1"/><path d="M1453 688.5 H1823" stroke="#3a3d42" stroke-width="1"/><path d="M1453 730.5 H1823" stroke="#3a3d42" stroke-width="1"/><path d="M1453 772.5 H1823" stroke="#3a3d42" stroke-width="1"/><path d="M1453 814.5 H1823" stroke="#3a3d42" stroke-width="1"/><path d="M1477.5 647 V815" stroke="#3a3d42" stroke-width="1"/><path d="M1539.5 647 V815" stroke="#3a3d42" stroke-width="1"/><path d="M1600.5 647 V815" stroke="#3a3d42" stroke-width="1"/><path d="M1662.5 647 V815" stroke="#3a3d42" stroke-width="1"/><path d="M1723.5 647 V815" stroke="#3a3d42" stroke-width="1"/><path d="M1785.5 647 V815" stroke="#3a3d42" stroke-width="1"/><path d="M1490.5 646 V814" stroke="#e05555" stroke-width="1" stroke-dasharray="3,2"/><path d="M1485.5 821 L1490.5 815 L1495.5 821 Z" fill="#e05555"/></svg>
<div class="t" style="right:389px;top:646.5px;font-size:12px;color:#c7d0d9;font-weight:400;transform:translateY(-50%);letter-spacing:-0.25px;-webkit-text-stroke:0.15px #c7d0d9;">1 B</div>
<div class="t" style="right:389px;top:688.175px;font-size:12px;color:#c7d0d9;font-weight:400;transform:translateY(-50%);letter-spacing:-0.25px;-webkit-text-stroke:0.15px #c7d0d9;">0.750 B</div>
<div class="t" style="right:389px;top:729.85px;font-size:12px;color:#c7d0d9;font-weight:400;transform:translateY(-50%);letter-spacing:-0.25px;-webkit-text-stroke:0.15px #c7d0d9;">0.500 B</div>
<div class="t" style="right:389px;top:771.5250000000001px;font-size:12px;color:#c7d0d9;font-weight:400;transform:translateY(-50%);letter-spacing:-0.25px;-webkit-text-stroke:0.15px #c7d0d9;">0.250 B</div>
<div class="t" style="right:389px;top:813.2px;font-size:12px;color:#c7d0d9;font-weight:400;transform:translateY(-50%);letter-spacing:-0.25px;-webkit-text-stroke:0.15px #c7d0d9;">0 B</div>
<div class="t" style="left:1477.7px;top:835.1999999999999px;font-size:12px;color:#c7d0d9;font-weight:400;transform:translate(-50%,-50%);-webkit-text-stroke:0.15px #c7d0d9;">16:55</div>
<div class="t" style="left:1539.25px;top:835.1999999999999px;font-size:12px;color:#c7d0d9;font-weight:400;transform:translate(-50%,-50%);-webkit-text-stroke:0.15px #c7d0d9;">17:00</div>
<div class="t" style="left:1600.8px;top:835.1999999999999px;font-size:12px;color:#c7d0d9;font-weight:400;transform:translate(-50%,-50%);-webkit-text-stroke:0.15px #c7d0d9;">17:05</div>
<div class="t" style="left:1662.35px;top:835.1999999999999px;font-size:12px;color:#c7d0d9;font-weight:400;transform:translate(-50%,-50%);-webkit-text-stroke:0.15px #c7d0d9;">17:10</div>
<div class="t" style="left:1723.9px;top:835.1999999999999px;font-size:12px;color:#c7d0d9;font-weight:400;transform:translate(-50%,-50%);-webkit-text-stroke:0.15px #c7d0d9;">17:15</div>
<div class="t" style="left:1785.45px;top:835.1999999999999px;font-size:12px;color:#c7d0d9;font-weight:400;transform:translate(-50%,-50%);-webkit-text-stroke:0.15px #c7d0d9;">17:20</div>
<div class="t" style="left:1622.7px;top:711px;font-size:14px;color:#d8d9da;font-weight:400;transform:translate(-50%,-50%);">No data</div>
</body></html>
